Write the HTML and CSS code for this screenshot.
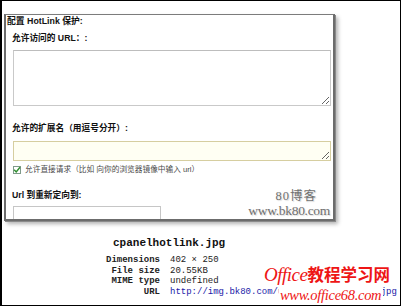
FILE: index.html
```html
<!DOCTYPE html>
<html lang="zh-CN">
<head>
<meta charset="utf-8">
<title>cpanelhotlink.jpg</title>
<link rel="stylesheet" href="styles.css">
</head>
<body>
<div class="photo">
  <div class="shot">
    <div class="panel-title">配置 HotLink 保护:</div>
    <div class="fields">
      <div class="label l-url">允许访问的 URL：:</div>
      <textarea class="area"></textarea>
      <div class="label l-ext">允许的扩展名（用逗号分开）:</div>
      <textarea class="area ext" rows="1"></textarea>
      <label class="check-row">
        <span class="box"><svg width="8" height="8" viewBox="0 0 8 8"><path d="M1.2 3.8 L3.2 6 L7 1.2" fill="none" stroke="#2f8f2f" stroke-width="1.4"/></svg></span>
        <span class="check-text">允许直接请求（比如 向你的浏览器镜像中输入 url）</span>
      </label>
      <div class="label l-redir">Url 到重新定向到:</div>
      <input class="redir" type="text">
    </div>
    <div class="wm-blog">
      <div class="wm-blog-name">80博客</div>
      <div class="wm-blog-url">www.bk80.com</div>
    </div>
  </div>
  <div class="caption">
    <div class="fname">cpanelhotlink.jpg</div>
    <dl class="meta">
      <dt>Dimensions</dt><dd>402 × 250</dd>
      <dt>File size</dt><dd>20.55KB</dd>
      <dt>MIME type</dt><dd>undefined</dd>
      <dt>URL</dt><dd class="url">http://img.bk80.com/uploads/allimg/hot.jpg</dd>
    </dl>
  </div>
  <div class="wm-office">
    <div class="wm-office-name"><span class="wm-latin">Office</span><span class="wm-cjk">教程学习网</span></div>
    <div class="wm-office-url">www.office68.com</div>
  </div>
</div>
</body>
</html>
```

FILE: styles.css
```css
html, body {
  margin: 0;
  padding: 0;
  background: #ffffff;
}

.photo {
  position: relative;
  width: 401px;
  height: 306px;
  box-sizing: border-box;
  border: 1px solid #000;
  border-left-width: 2px;
  overflow: hidden;
  font-family: "Liberation Sans", "Noto Sans CJK SC", sans-serif;
}

.shot {
  position: relative;
  width: 331px;
  height: 207px;
  box-sizing: border-box;
  margin: 13px 0 0 2px;
  border: 2px solid #6c6c6c;
  border-top: 1px solid #7c7c7c;
  background: #fff;
  overflow: hidden;
  box-shadow: 1px 1px 0 #8a8a8a, 3px 3px 4px rgba(0, 0, 0, 0.3);
}

.panel-title {
  padding-left: 1px;
  font-size: 8.8px;
  line-height: 12px;
  font-weight: bold;
  color: #111;
}

.fields {
  display: flex;
  flex-direction: column;
  align-items: flex-start;
  padding-left: 7px;
}

.label {
  margin-left: -1px;
  font-size: 8.7px;
  line-height: 12px;
  font-weight: bold;
  color: #111;
}

.l-url { margin-top: 5px; }
.l-ext { margin-top: 16px; }
.l-redir { margin-top: 14px; }

.area {
  display: block;
  box-sizing: border-box;
  width: 318px;
  height: 56px;
  margin: 6px 0 0 0;
  padding: 2px;
  border: 1px solid #c9c9c9;
  border-top-color: #bdbdbd;
  background: #fff;
  font-size: 9px;
}

.area.ext {
  height: 20px;
  margin-top: 7px;
  border-color: #d6cea0;
  background: #fffff3;
}

.check-row {
  display: flex;
  align-items: center;
  gap: 4px;
  margin-top: 3px;
  height: 11px;
}

.box {
  display: flex;
  align-items: center;
  justify-content: center;
  width: 8px;
  height: 8px;
  box-sizing: border-box;
  border: 1px solid #7f9a8a;
  background: #fff;
}

.box svg {
  display: block;
  flex: none;
}

.check-text {
  font-size: 7.7px;
  line-height: 11px;
  color: #4a4a4a;
  white-space: nowrap;
}

.redir {
  display: block;
  box-sizing: border-box;
  width: 148px;
  height: 20px;
  margin: 5px 0 0 0;
  padding: 0;
  border: 1px solid #c6c6c6;
  background: #fff;
}

.wm-blog {
  position: absolute;
  right: 3px;
  top: 173px;
  font-family: "Liberation Serif", "Noto Sans CJK SC", serif;
  color: #707070;
  text-align: right;
  text-shadow: 1px 1px 1px rgba(0, 0, 0, 0.15);
}

.wm-blog-name {
  padding-right: 13px;
  font-size: 12.5px;
  line-height: 16px;
  letter-spacing: 1px;
  white-space: nowrap;
}

.wm-blog-url {
  font-size: 13.5px;
  line-height: 14px;
  letter-spacing: -0.3px;
  white-space: nowrap;
}

.caption {
  margin-top: 16px;
}

.fname {
  padding-left: 111px;
  font-family: "Liberation Mono", monospace;
  font-size: 11px;
  line-height: 13px;
  font-weight: bold;
  color: #111;
}

.meta {
  display: grid;
  grid-template-columns: 158px auto;
  column-gap: 10px;
  margin: 5px 0 0 0;
  font-family: "Liberation Mono", monospace;
  font-size: 9px;
  line-height: 10.5px;
  color: #222;
}

.meta dt {
  text-align: right;
  font-weight: bold;
}

.meta dd {
  margin: 0;
  white-space: nowrap;
}

.meta .url {
  color: #1a1aa8;
}

.wm-office {
  position: absolute;
  left: 262px;
  top: 262px;
  color: #ee1515;
}

.wm-office-name {
  line-height: 22px;
  white-space: nowrap;
}

.wm-latin {
  font-family: "Liberation Serif", serif;
  font-style: italic;
  font-size: 19px;
  letter-spacing: -0.5px;
}

.wm-cjk {
  font-family: "Noto Sans CJK SC", sans-serif;
  font-weight: bold;
  font-size: 16.5px;
}

.wm-office-url {
  box-sizing: border-box;
  width: 104px;
  margin-left: 15px;
  padding: 0 0 1px 1px;
  background: #fff;
  font-family: "Liberation Serif", serif;
  font-style: italic;
  font-size: 14.5px;
  line-height: 16px;
  letter-spacing: -0.3px;
  white-space: nowrap;
}
```
